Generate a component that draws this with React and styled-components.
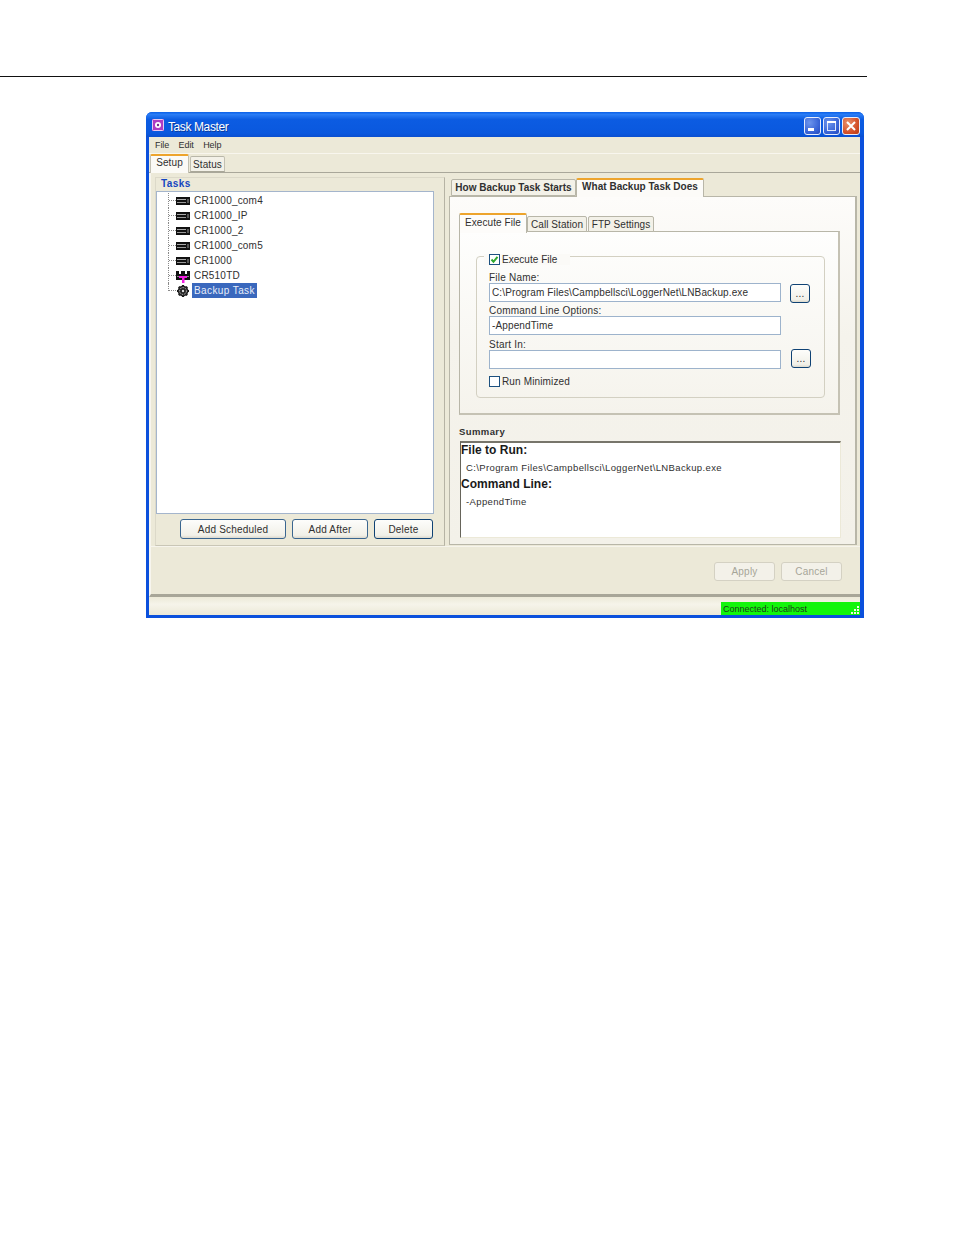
import React from "react";
import styled, { createGlobalStyle } from "styled-components";

const Global = createGlobalStyle`
  html, body { margin: 0; padding: 0; background: #fff; }
  body { font-family: "Liberation Sans", Arial, sans-serif; font-size: 10px; color: #303030; }
  * { box-sizing: border-box; }
`;

const Page = styled.div`
  width: 954px;
  height: 1235px;
  padding-top: 76px;
`;
const Rule = styled.div`
  width: 867px;
  height: 1px;
  background: #111;
`;
const Win = styled.div`
  width: 718px;
  height: 506px;
  margin: 35px 0 0 146px;
  padding: 0 4px 3px 3px;
  background: #0b50dc;
  border-radius: 6px 6px 0 0;
  display: flex;
  flex-direction: column;
`;
const TitleBar = styled.div`
  height: 25px;
  margin: 0 -4px 0 -3px;
  padding: 5px 4px 0 6px;
  border-radius: 6px 6px 0 0;
  background: linear-gradient(180deg, #0a60e8 0%, #2a7cf5 10%, #0c5ce2 30%, #0a58de 85%, #0a4fd0 100%);
  display: flex;
  align-items: flex-start;
  color: #fff;
`;
const AppIcon = styled.svg`
  width: 12px;
  height: 12px;
  margin-top: 2px;
  flex: none;
`;
const TitleText = styled.div`
  margin: 3px 0 0 4px;
  flex: 1;
  font-size: 12px;
  line-height: 14px;
  letter-spacing: -0.4px;
  text-shadow: 1px 1px 0 #0a3a9c;
`;
const WinControls = styled.div`
  display: flex;
  gap: 2px;
  flex: none;
`;
const WinBtn = styled.div`
  width: ${p => (p.$close ? 18 : 17)}px;
  height: 18px;
  border: 1px solid #e8eefc;
  border-radius: 3px;
  background: ${p =>
    p.$close
      ? "radial-gradient(circle at 30% 30%, #e9906c, #d4512a 60%, #b93a14)"
      : "radial-gradient(circle at 30% 30%, #6d95ec, #3a66d8 60%, #2448bc)"};
  display: flex;
  align-items: center;
  justify-content: center;
`;
const Menu = styled.div`
  height: 16px;
  padding: 0 0 1px 6px;
  background: #ece9d8;
  display: flex;
  gap: 9.5px;
  align-items: center;
  font-size: 9px;
  letter-spacing: -0.1px;
`;
const OuterTabs = styled.div`
  height: 20px;
  padding-left: 1px;
  background: #ece9d8;
  border-top: 1px solid #f8f6ee;
  border-bottom: 1px solid #a9a79a;
  display: flex;
  align-items: flex-end;
`;
const OuterTab = styled.div`
  position: relative;
  width: ${p => p.$w}px;
  height: ${p => (p.$active ? 19 : 16)}px;
  margin-bottom: ${p => (p.$active ? -1 : 0)}px;
  margin-left: ${p => p.$ml || 0}px;
  background: ${p => (p.$active ? "#fbfaf6" : "#f3f1e8")};
  border: 1px solid #c2c0b2;
  border-bottom: ${p => (p.$active ? "0" : "1px solid #a9a798")};
  border-top: ${p => (p.$active ? "2px solid #eda42c" : "1px solid #b8b6a8")};
  border-radius: 2px 2px 0 0;
  text-align: center;
  line-height: ${p => (p.$active ? 13 : 15)}px;
  font-size: 10px;
  letter-spacing: 0.1px;
`;
const Content = styled.div`
  height: 424px;
  background: #ece9d8;
  border-left: 2px solid #f7f5ee;
  display: flex;
  flex-direction: column;
  border-bottom: 3px solid #a8a698;
`;
const Panels = styled.div`
  height: 369px;
  margin-top: 4px;
  padding-left: 4px;
  display: flex;
  gap: 4px;
`;
const LeftPanel = styled.section`
  width: 290px;
  border: 1px solid #dcd9c9;
  border-bottom-color: #c9c6b6;
  border-right-color: #b6b3a4;
  display: flex;
  flex-direction: column;
`;
const GroupTitle = styled.div`
  height: 13px;
  padding-left: 5px;
  line-height: 11px;
  font-weight: 700;
  font-size: 10px;
  letter-spacing: 0.4px;
  color: #1546c0;
`;
const TreeBox = styled.div`
  width: 278px;
  height: 323px;
  background: #fff;
  border: 1px solid #a4b5cc;
  padding: 1px 0 0 11px;
`;
const TreeRow = styled.div`
  height: 15px;
  display: flex;
  align-items: center;
`;
const Connector = styled.span`
  width: 8px;
  flex: none;
  align-self: flex-start;
  height: ${p => (p.$last ? 8 : 15)}px;
  border-left: 1px dotted #8a8a8a;
  background: repeating-linear-gradient(90deg, #8a8a8a 0 1px, transparent 1px 2px)
    ${p => (p.$last ? "bottom" : "center")} / 100% 1px no-repeat;
`;
const TreeIcon = styled.svg`
  width: 14px;
  height: 14px;
  flex: none;
  margin-right: ${p => (p.$sel ? 2 : 4)}px;
`;
const TreeLabel = styled.span`
  height: 15px;
  line-height: 15px;
  padding: 0 ${p => (p.$sel ? "2px" : "0")};
  font-size: 10px;
  letter-spacing: ${p => (p.$sel ? 0.4 : 0.2)}px;
  color: ${p => (p.$sel ? "#e8eefa" : "#303030")};
  background: ${p => (p.$sel ? "#3a68bd" : "transparent")};
`;
const ButtonRow = styled.div`
  margin-top: 5px;
  padding-left: 24px;
  display: flex;
  gap: 6px;
`;
const XpButton = styled.button`
  width: ${p => p.$w}px;
  height: ${p => p.$h || 20}px;
  margin: 0;
  padding: 0;
  font-family: inherit;
  font-size: 10px;
  letter-spacing: 0.2px;
  color: ${p => (p.disabled ? "#a6a598" : "#303030")};
  background: ${p => (p.disabled ? "#f3f1e9" : "linear-gradient(180deg, #fdfdfb, #f1f0e8 85%, #dcd9cd)")};
  border: 1px solid ${p => (p.disabled ? "#d4d1c3" : p.$dark ? "#0f4274" : "#3a6690")};
  border-radius: 3px;
`;
const RightPanel = styled.section`
  width: 408px;
  display: flex;
  flex-direction: column;
`;
const TabStrip = styled.div`
  height: 19px;
  padding-left: 2px;
  display: flex;
  align-items: flex-end;
`;
const PaneTab = styled.div`
  width: ${p => p.$w}px;
  height: ${p => (p.$active ? 19 : 17)}px;
  margin-bottom: ${p => (p.$active ? -1 : 0)}px;
  position: relative;
  z-index: ${p => (p.$active ? 1 : 0)};
  background: ${p => (p.$active ? "#fcfbf8" : "#f3f1e8")};
  border: 1px solid #b8b6a8;
  border-bottom: ${p => (p.$active ? "0" : "1px solid #b8b6a8")};
  border-top: ${p => (p.$active ? "2px solid #eda42c" : "1px solid #b8b6a8")};
  border-radius: 2px 2px 0 0;
  text-align: center;
  line-height: ${p => (p.$active ? 13 : 15)}px;
  font-size: 10px;
  font-weight: 700;
  letter-spacing: 0.02px;
`;
const TabPane = styled.div`
  width: 408px;
  height: 349px;
  padding: 16px 0 0 9px;
  background: linear-gradient(180deg, #fdfcfa, #f5f3ec 40%, #f3f1e9);
  border: 1px solid #b8b6a8;
  border-right: 2px solid #b8b6a8;
`;
const InnerTabs = styled.div`
  height: 19px;
  display: flex;
  align-items: flex-end;
`;
const InnerTab = styled.div`
  width: ${p => p.$w}px;
  height: ${p => (p.$active ? 20 : 16)}px;
  margin-left: ${p => p.$ml || 0}px;
  position: relative;
  z-index: ${p => (p.$active ? 1 : 0)};
  margin-bottom: ${p => (p.$active ? -1 : 0)}px;
  background: ${p => (p.$active ? "#fdfcfa" : "#f3f1e8")};
  border: 1px solid #b8b6a8;
  border-bottom: ${p => (p.$active ? "0" : "1px solid #b8b6a8")};
  border-top: ${p => (p.$active ? "2px solid #eda42c" : "1px solid #b8b6a8")};
  border-radius: 2px 2px 0 0;
  text-align: center;
  line-height: 15px;
  font-size: 10px;
  letter-spacing: 0.08px;
`;
const InnerPanel = styled.div`
  width: 381px;
  height: 184px;
  margin-top: -1px;
  padding: 24px 0 0 16px;
  background: linear-gradient(180deg, #fefefd, #f5f3ec);
  border: 1px solid #b8b6a8;
  border-right: 2px solid #c5c2b4;
  border-bottom: 2px solid #c5c2b4;
`;
const Group = styled.div`
  width: 349px;
  height: 142px;
  padding-left: 12px;
  border: 1px solid #d3d0c2;
  border-radius: 4px;
`;
const Legend = styled.div`
  width: 86px;
  height: 11px;
  margin: -3px 0 0 -5px;
  padding-left: 5px;
  background: #fbfaf7;
  display: flex;
  align-items: center;
`;
const CheckBox = styled.span`
  width: 11px;
  height: 11px;
  flex: none;
  margin-right: 2px;
  background: #fff;
  border: 1px solid #1d5180;
  display: flex;
  align-items: center;
  justify-content: center;
`;
const CheckText = styled.span`
  font-size: 10px;
  letter-spacing: ${p => p.$ls}px;
  white-space: nowrap;
`;
const FieldLabel = styled.div`
  height: ${p => p.$h}px;
  margin-top: ${p => p.$mt}px;
  line-height: ${p => p.$h}px;
  font-size: 10px;
  letter-spacing: 0.22px;
  white-space: nowrap;
`;
const FieldRow = styled.div`
  height: 19px;
  display: flex;
  align-items: flex-start;
`;
const TextInput = styled.input`
  width: 292px;
  height: 19px;
  margin: 0;
  padding: 0 1px 0 2px;
  font-family: inherit;
  font-size: 10px;
  letter-spacing: 0.13px;
  color: #303030;
  background: #fff;
  border: 1px solid #9db3cc;
  outline: none;
`;
const Browse = styled(XpButton)`
  margin-left: ${p => p.$ml}px;
  margin-top: ${p => p.$mt}px;
`;
const MinRow = styled.div`
  margin-top: 7px;
  display: flex;
  align-items: center;
`;
const SummaryTitle = styled.div`
  height: 11px;
  margin-top: 11px;
  line-height: 11px;
  font-size: 9.5px;
  font-weight: 700;
  letter-spacing: 0.4px;
`;
const SummaryBox = styled.div`
  width: 381px;
  height: 97px;
  margin: 4px 0 0 1px;
  background: #fff;
  border-top: 2px solid #77756b;
  border-left: 1px solid #66645a;
  border-right: 1px solid #ece9d8;
  border-bottom: 1px solid #ece9d8;
`;
const SumHead = styled.div`
  height: 17px;
  line-height: 14px;
  font-size: 12px;
  font-weight: 700;
  letter-spacing: 0.02px;
  color: #1a1a1a;
`;
const SumText = styled.div`
  height: 17px;
  padding-left: 5px;
  line-height: 15px;
  font-size: 9.5px;
  letter-spacing: 0.37px;
`;
const ActionBar = styled.div`
  flex: 1;
  padding: 15px 18px 0 0;
  border-top: 1px solid #f6f4ec;
  display: flex;
  justify-content: flex-end;
  align-items: flex-start;
  gap: 6px;
`;
const StatusBar = styled.div`
  height: 18px;
  background: linear-gradient(180deg, #ece9d8, #f6f4ea 40%, #ece9d8);
  display: flex;
  justify-content: flex-end;
  align-items: flex-end;
`;
const StatusCell = styled.div`
  width: 139px;
  height: 13px;
  padding-left: 2px;
  overflow: hidden;
  background: #12f50c;
  color: #1a3a1a;
  font-size: 9px;
  line-height: 15px;
  display: flex;
  justify-content: space-between;
`;
const Grip = styled.svg`
  width: 10px;
  height: 10px;
  margin-top: 3px;
  flex: none;
`;

const Device = () => (
  <TreeIcon viewBox="0 0 14 14">
    <rect x="0" y="3" width="14" height="8" fill="#111" />
    <rect x="1" y="5" width="9" height="1" fill="#aaa" />
    <rect x="1" y="8" width="9" height="1" fill="#999" />
    <rect x="11" y="5" width="2" height="4" fill="#555" />
  </TreeIcon>
);
const T510 = () => (
  <TreeIcon viewBox="0 0 14 14">
    <rect x="0" y="2" width="14" height="9" fill="#111" />
    <rect x="3" y="2" width="2" height="3" fill="#fff" />
    <rect x="9" y="2" width="2" height="3" fill="#fff" />
    <rect x="1" y="7" width="2" height="1" fill="#888" />
    <rect x="11" y="7" width="2" height="1" fill="#888" />
    <rect x="3" y="7" width="8" height="2" fill="#f020e0" />
    <rect x="6" y="8" width="2.5" height="6" fill="#f020e0" />
  </TreeIcon>
);
const Gear = () => (
  <TreeIcon viewBox="0 0 14 14" $sel>
    <g stroke="#111" strokeWidth="2">
      <line x1="7" y1="1" x2="7" y2="13" />
      <line x1="1" y1="7" x2="13" y2="7" />
      <line x1="2.8" y1="2.8" x2="11.2" y2="11.2" />
      <line x1="2.8" y1="11.2" x2="11.2" y2="2.8" />
    </g>
    <circle cx="7" cy="7" r="5.4" fill="#222" />
    <circle cx="7" cy="7" r="3.4" fill="none" stroke="#c4c4c4" strokeWidth="1" strokeDasharray="1.5 1" />
    <circle cx="7" cy="7" r="1.2" fill="#ddd" />
  </TreeIcon>
);
const Tick = () => (
  <svg width="9" height="9" viewBox="0 0 9 9">
    <path d="M1.5 4.5 L3.5 6.8 L7.5 1.8" fill="none" stroke="#2fa82f" strokeWidth="2" />
  </svg>
);

const tree = [
  ["CR1000_com4", Device],
  ["CR1000_IP", Device],
  ["CR1000_2", Device],
  ["CR1000_com5", Device],
  ["CR1000", Device],
  ["CR510TD", T510],
];

export default function App() {
  return (
    <Page>
      <Global />
      <Rule />
      <Win>
        <TitleBar>
          <AppIcon viewBox="0 0 12 12">
            <rect width="12" height="12" rx="1" fill="#b03cc4" />
            <rect x="0.5" y="0.5" width="11" height="11" rx="1" fill="none" stroke="#e9c8f0" />
            <circle cx="6" cy="6" r="3" fill="#fff" />
            <circle cx="6" cy="6" r="1.2" fill="#7a2a90" />
          </AppIcon>
          <TitleText>Task Master</TitleText>
          <WinControls>
            <WinBtn>
              <svg width="15" height="16" viewBox="0 0 15 16">
                <rect x="3" y="10" width="6" height="3" fill="#fff" />
              </svg>
            </WinBtn>
            <WinBtn>
              <svg width="15" height="16" viewBox="0 0 15 16">
                <rect x="3.5" y="3.5" width="8" height="9" fill="none" stroke="#dfe8fb" />
                <rect x="3" y="3" width="9" height="2" fill="#fff" />
              </svg>
            </WinBtn>
            <WinBtn $close>
              <svg width="16" height="16" viewBox="0 0 16 16">
                <path d="M4 4 L12 12 M12 4 L4 12" stroke="#fff" strokeWidth="2" />
              </svg>
            </WinBtn>
          </WinControls>
        </TitleBar>
        <Menu>
          <span>File</span>
          <span>Edit</span>
          <span>Help</span>
        </Menu>
        <OuterTabs>
          <OuterTab $w={39} $active>Setup</OuterTab>
          <OuterTab $w={35} $ml={1}>Status</OuterTab>
        </OuterTabs>
        <Content>
          <Panels>
            <LeftPanel>
              <GroupTitle>Tasks</GroupTitle>
              <TreeBox>
                {tree.map(([name, Icon]) => (
                  <TreeRow key={name}>
                    <Connector />
                    <Icon />
                    <TreeLabel>{name}</TreeLabel>
                  </TreeRow>
                ))}
                <TreeRow>
                  <Connector $last />
                  <Gear />
                  <TreeLabel $sel>Backup Task</TreeLabel>
                </TreeRow>
              </TreeBox>
              <ButtonRow>
                <XpButton $w={106}>Add Scheduled</XpButton>
                <XpButton $w={76}>Add After</XpButton>
                <XpButton $w={59} $dark>Delete</XpButton>
              </ButtonRow>
            </LeftPanel>
            <RightPanel>
              <TabStrip>
                <PaneTab $w={125}>How Backup Task Starts</PaneTab>
                <PaneTab $w={128} $active>What Backup Task Does</PaneTab>
              </TabStrip>
              <TabPane>
                <InnerTabs>
                  <InnerTab $w={68} $active>Execute File</InnerTab>
                  <InnerTab $w={60}>Call Station</InnerTab>
                  <InnerTab $w={66} $ml={1}>FTP Settings</InnerTab>
                </InnerTabs>
                <InnerPanel>
                  <Group>
                    <Legend>
                      <CheckBox><Tick /></CheckBox>
                      <CheckText $ls={0.03}>Execute File</CheckText>
                    </Legend>
                    <FieldLabel $h={11} $mt={7}>File Name:</FieldLabel>
                    <FieldRow>
                      <TextInput readOnly value="C:\Program Files\Campbellsci\LoggerNet\LNBackup.exe" />
                      <Browse $w={20} $h={19} $ml={9} $mt={1} $dark>...</Browse>
                    </FieldRow>
                    <FieldLabel $h={10} $mt={4}>Command Line Options:</FieldLabel>
                    <FieldRow>
                      <TextInput readOnly value="-AppendTime" />
                    </FieldRow>
                    <FieldLabel $h={11} $mt={4}>Start In:</FieldLabel>
                    <FieldRow>
                      <TextInput readOnly value="" />
                      <Browse $w={20} $h={19} $ml={10} $mt={-1} $dark>...</Browse>
                    </FieldRow>
                    <MinRow>
                      <CheckBox />
                      <CheckText $ls={0.14}>Run Minimized</CheckText>
                    </MinRow>
                  </Group>
                </InnerPanel>
                <SummaryTitle>Summary</SummaryTitle>
                <SummaryBox>
                  <SumHead>File to Run:</SumHead>
                  <SumText>C:\Program Files\Campbellsci\LoggerNet\LNBackup.exe</SumText>
                  <SumHead>Command Line:</SumHead>
                  <SumText>-AppendTime</SumText>
                </SummaryBox>
              </TabPane>
            </RightPanel>
          </Panels>
          <ActionBar>
            <XpButton $w={61} $h={19} disabled>Apply</XpButton>
            <XpButton $w={61} $h={19} disabled>Cancel</XpButton>
          </ActionBar>
        </Content>
        <StatusBar>
          <StatusCell>
            <span>Connected: localhost</span>
            <Grip viewBox="0 0 10 10">
              <g fill="#f4f4e8">
                <rect x="7" y="1" width="2" height="2" />
                <rect x="4" y="4" width="2" height="2" />
                <rect x="7" y="4" width="2" height="2" />
                <rect x="1" y="7" width="2" height="2" />
                <rect x="4" y="7" width="2" height="2" />
                <rect x="7" y="7" width="2" height="2" />
              </g>
            </Grip>
          </StatusCell>
        </StatusBar>
      </Win>
    </Page>
  );
}
